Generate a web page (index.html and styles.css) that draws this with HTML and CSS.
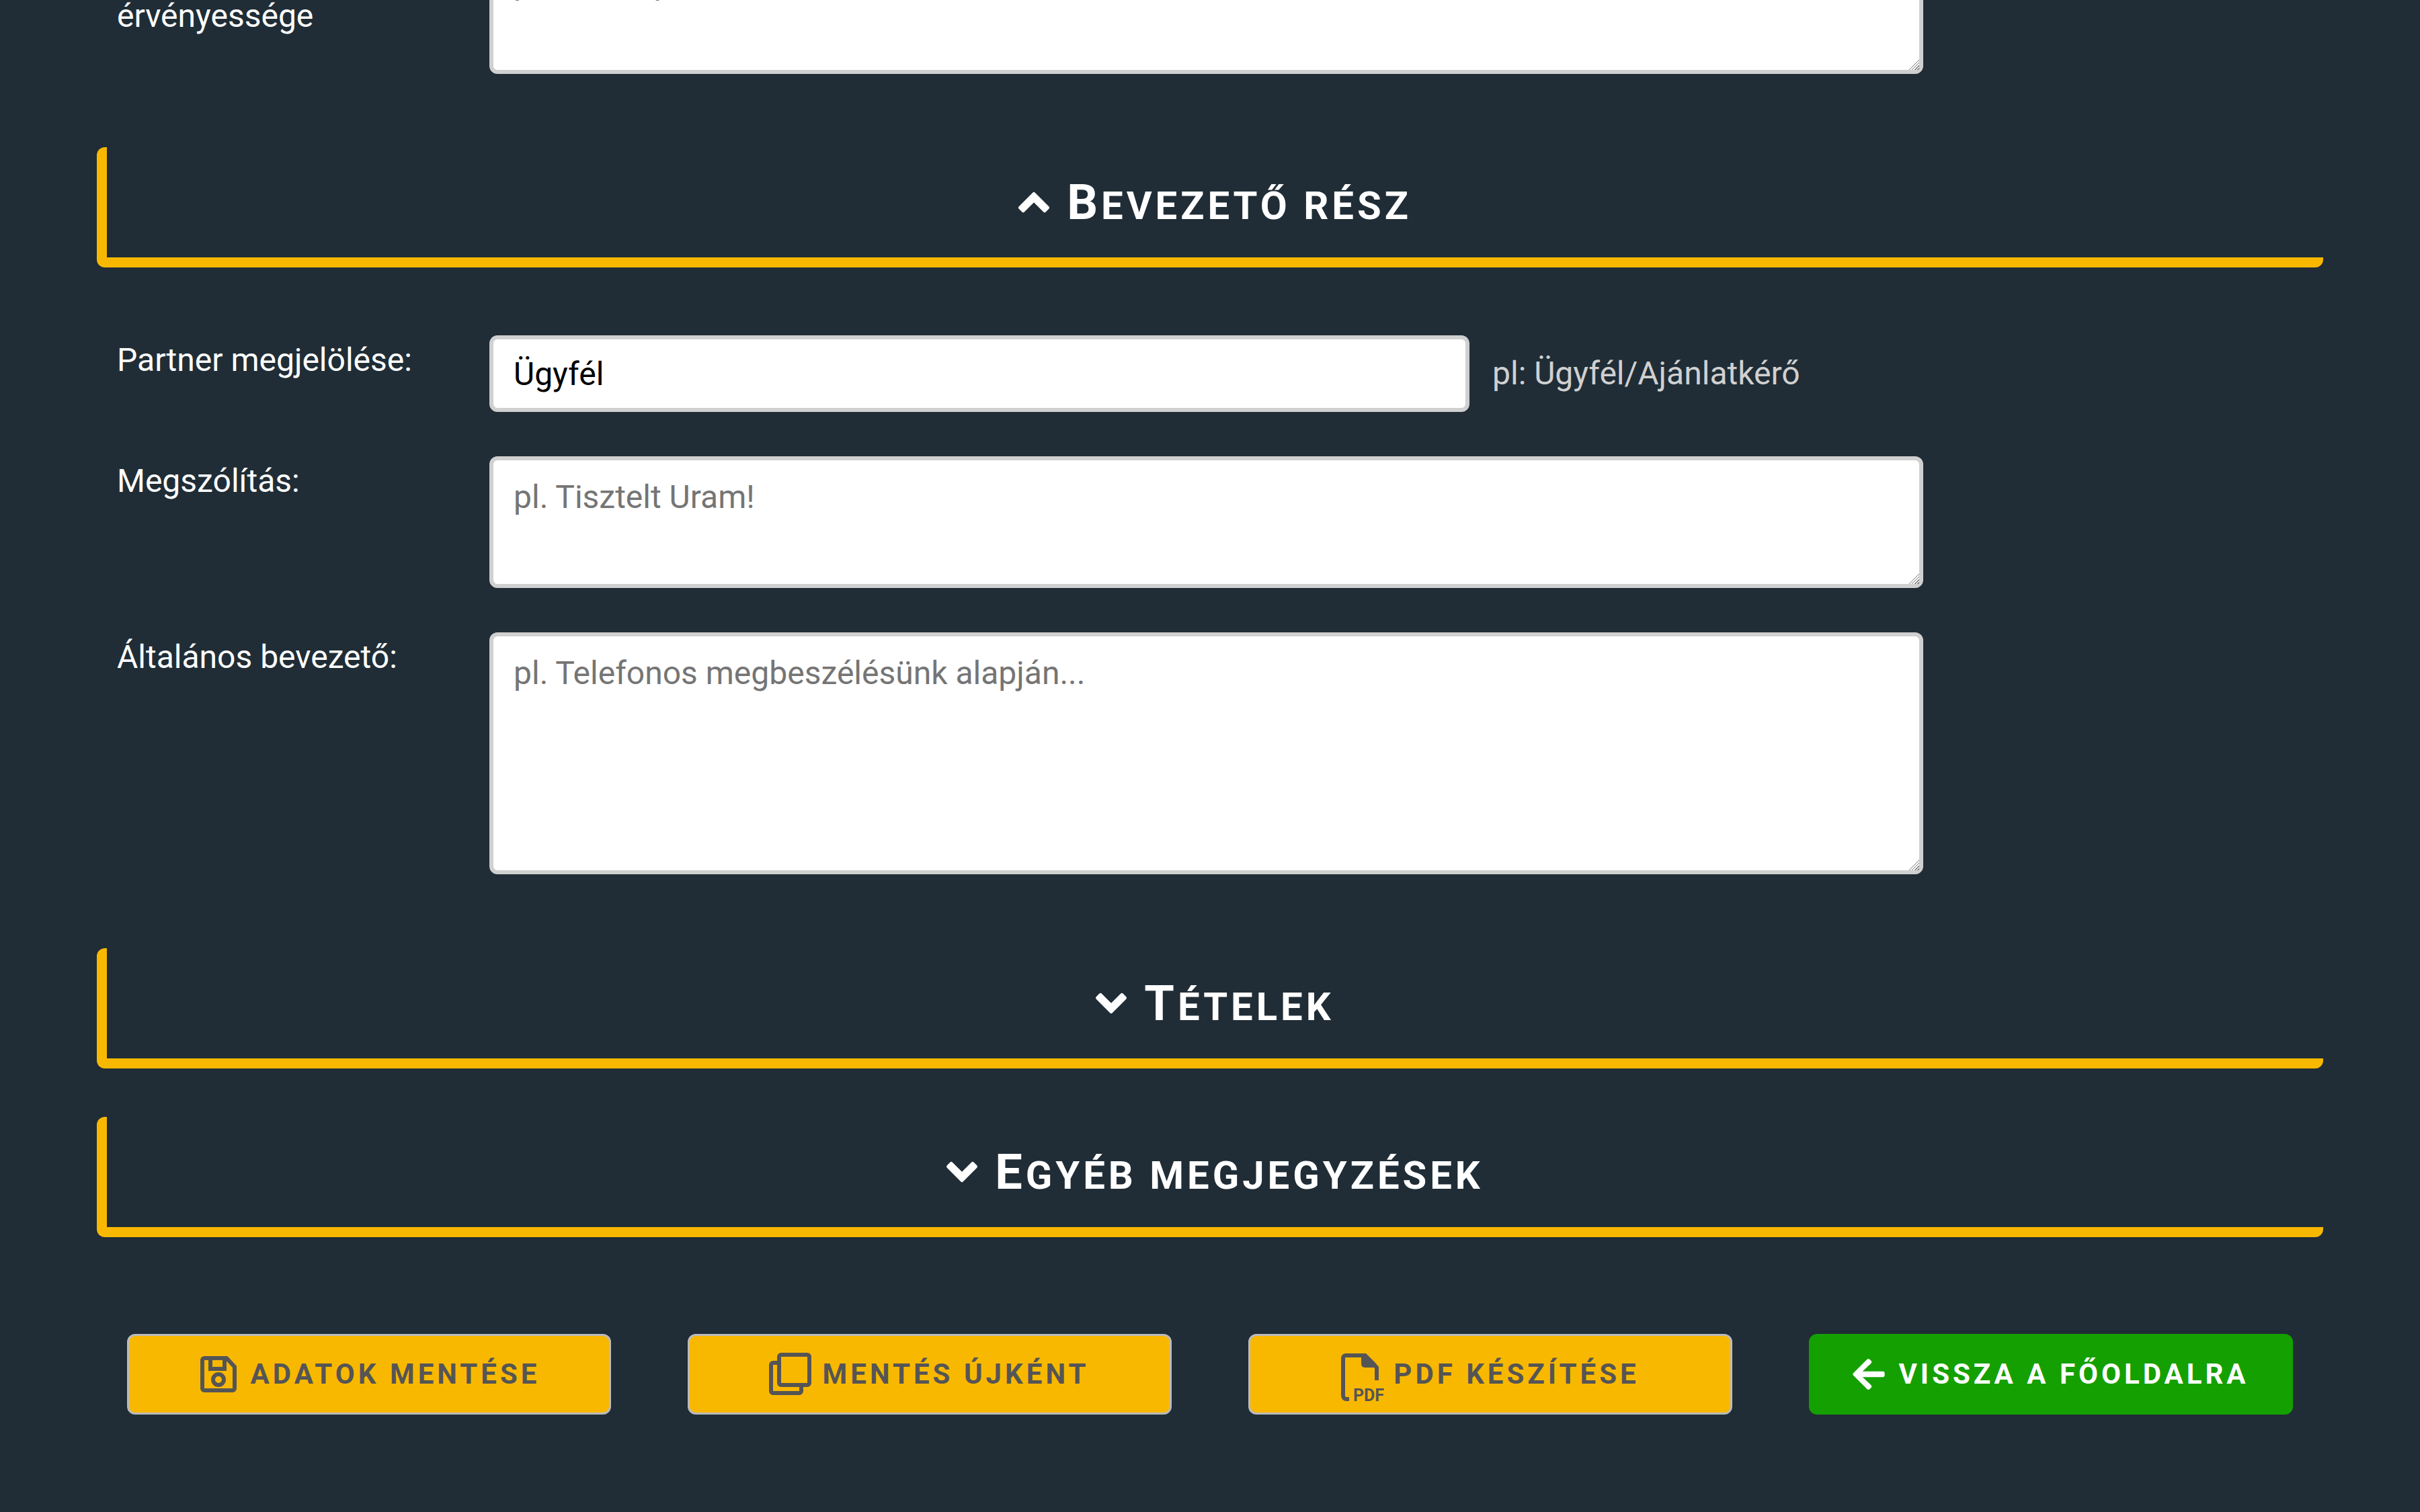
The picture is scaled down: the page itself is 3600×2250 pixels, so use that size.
FILE: index.html
```html
<!DOCTYPE html>
<html lang="hu">
<head>
<meta charset="utf-8">
<title>Árajánlat szerkesztése</title>
<link rel="stylesheet" href="styles.css">
</head>
<body>
<form class="page">
  <div class="fields fields-first">
    <div class="row">
      <label class="label" for="validity">Az ajánlat érvényessége</label>
      <div class="control"><textarea class="box box-short" id="validity" placeholder="pl. 1 hónap"></textarea></div>
    </div>
  </div>

  <h2 class="section"><button class="section-toggle" type="button">
    <svg class="chevron" viewBox="0 0 46 30" aria-hidden="true"><path d="M23 2.500 2.500 23 7.200 27.600 23 11.800 38.800 27.600 43.500 23Z"/></svg>
    <span class="section-title">Bevezető rész</span>
  </button></h2>

  <div class="fields">
    <div class="row">
      <label class="label" for="partner">Partner megjelölése:</label>
      <div class="control"><input class="box box-line" id="partner" type="text" value="Ügyfél"><span class="hint">pl: Ügyfél/Ajánlatkérő</span></div>
    </div>
    <div class="row">
      <label class="label" for="greeting">Megszólítás:</label>
      <div class="control"><textarea class="box box-short" id="greeting" placeholder="pl. Tisztelt Uram!"></textarea></div>
    </div>
    <div class="row">
      <label class="label" for="intro">Általános bevezető:</label>
      <div class="control"><textarea class="box box-tall" id="intro" placeholder="pl. Telefonos megbeszélésünk alapján..."></textarea></div>
    </div>
  </div>

  <h2 class="section"><button class="section-toggle" type="button">
    <svg class="chevron" viewBox="0 0 46 30" aria-hidden="true"><path d="M23 27.500 2.500 7 7.200 2.400 23 18.200 38.800 2.400 43.500 7Z"/></svg>
    <span class="section-title">Tételek</span>
  </button></h2>
  <h2 class="section"><button class="section-toggle" type="button">
    <svg class="chevron" viewBox="0 0 46 30" aria-hidden="true"><path d="M23 27.500 2.500 7 7.200 2.400 23 18.200 38.800 2.400 43.500 7Z"/></svg>
    <span class="section-title">Egyéb megjegyzések</span>
  </button></h2>

  <div class="actions">
    <button class="action" type="submit">
      <svg class="icon" viewBox="0 0 72 72" aria-hidden="true"><path class="line" d="M15 12H48L60 25V57a3 3 0 0 1-3 3H15a3 3 0 0 1-3-3V15a3 3 0 0 1 3-3ZM24 12V28H45V12"/><circle class="line" cx="36" cy="44" r="8"/></svg>
      <span>Adatok mentése</span>
    </button>
    <button class="action" type="button">
      <svg class="icon" viewBox="0 0 72 72" aria-hidden="true"><rect class="line" x="19" y="7" width="45" height="45" rx="3"/><path class="line" d="M19 19H10a3 3 0 0 0-3 3V61a3 3 0 0 0 3 3H49a3 3 0 0 0 3-3V52"/></svg>
      <span>Mentés újként</span>
    </button>
    <button class="action" type="button">
      <svg class="icon" viewBox="0 0 72 72" aria-hidden="true"><path class="line" d="M18 73H14a5 5 0 0 1-5-5V12a4 4 0 0 1 4-4H41L59 26V45"/><path class="solid" d="M36 5H43L57 19Q60 22 60 26H41a5 5 0 0 1-5-5Z"/><text class="icon-text" x="24" y="76">PDF</text></svg>
      <span>PDF készítése</span>
    </button>
    <a class="action action-back" href="#">
      <svg class="icon-arrow" viewBox="0 0 448 512" aria-hidden="true"><path d="M257.500 445.100l-22.200 22.200c-9.400 9.400-24.600 9.400-33.900 0L7 273c-9.400-9.400-9.400-24.600 0-33.900L201.400 44.700c9.400-9.400 24.600-9.400 33.900 0l22.200 22.200c9.500 9.500 9.300 25-.4 34.300L136.600 216H424c13.300 0 24 10.700 24 24v32c0 13.300-10.700 24-24 24H136.600l120.500 114.800c9.800 9.300 10 24.800.4 34.300z"/></svg>
      <span>Vissza a főoldalra</span>
    </a>
  </div>
</form>
</body>
</html>
```
FILE: styles.css
```css
* { box-sizing: border-box; }

body {
  margin: 0;
  background: #202d36;
  color: #fff;
  font: 48px/56px Roboto, sans-serif;
}

.page {
  padding: 0 4%;
  overflow: hidden;
}

/* form rows */
.fields {
  display: flex;
  flex-direction: column;
  gap: 66px;
  padding: 29px 30px 110px;
}
.fields-first {
  margin-top: -86px;
  padding-top: 0;
  padding-bottom: 109px;
}

.row {
  display: grid;
  grid-template-columns: 554px 1fr;
  align-items: start;
}
.label { padding-right: 100px; line-height: 73px; }
.control { display: flex; align-items: center; gap: 34px; }

.box {
  display: block;
  border: 6px solid #d0d0d0;
  border-radius: 12px;
  padding: 27px 30px;
  background: #fff;
  color: #000;
  font: inherit;
}
.box::placeholder { color: #757575; }
.box::-webkit-resizer {
  background: linear-gradient(135deg,
    transparent 10px, #777 10px 11px,
    transparent 11px 13px, #777 13px 14px,
    transparent 14px 16px, #777 16px 17px,
    transparent 17px 19px, #777 19px 20px,
    transparent 20px);
}
.box-line { width: 1458px; height: 114px; }
.box-short { width: 2133px; height: 196px; }
.box-tall { width: 2133px; height: 360px; }
.hint { color: #d0d0d0; }

/* section headings */
.section {
  margin: 0 0 72px;
  border: solid #f9b800;
  border-width: 0 0 15px 15px;
  border-radius: 12px;
}
.section-toggle {
  display: flex;
  align-items: center;
  justify-content: center;
  gap: 26px;
  width: 100%;
  height: 164px;
  border: 0;
  padding: 0;
  background: none;
  color: inherit;
  font: 700 58px/84px Roboto, sans-serif;
  letter-spacing: 5px;
  text-transform: uppercase;
}
.section-title { padding-top: 6px; }
.section-title::first-letter { font-size: 72px; }
.chevron {
  width: 46px;
  height: 30px;
  overflow: visible;
  fill: #fff;
  stroke: #fff;
  stroke-width: 5px;
  stroke-linejoin: round;
}

/* bottom buttons */
.actions {
  display: grid;
  grid-template-columns: repeat(4, 1fr);
  gap: 114px;
  padding: 72px 45px 144px;
}
.action {
  display: flex;
  align-items: center;
  justify-content: center;
  gap: 12px;
  height: 120px;
  border: 3px solid #bbb;
  border-radius: 12px;
  padding: 0 6px 0 0;
  background: #f9b800;
  color: #555;
  font: 700 42px/48px Roboto, sans-serif;
  letter-spacing: 5px;
  text-transform: uppercase;
  text-decoration: none;
}
.action-back {
  border-color: #14a000;
  padding: 0;
  background: #14a000;
  color: #fff;
  gap: 20px;
}
.icon { width: 72px; height: 72px; overflow: visible; }
.icon-arrow { width: 48px; height: 54px; fill: #fff; }
.line { fill: none; stroke: #555; stroke-width: 6px; }
.solid { fill: #555; }
.icon-text {
  fill: #555;
  font: 700 25px Roboto, sans-serif;
  letter-spacing: 0;
}
```
